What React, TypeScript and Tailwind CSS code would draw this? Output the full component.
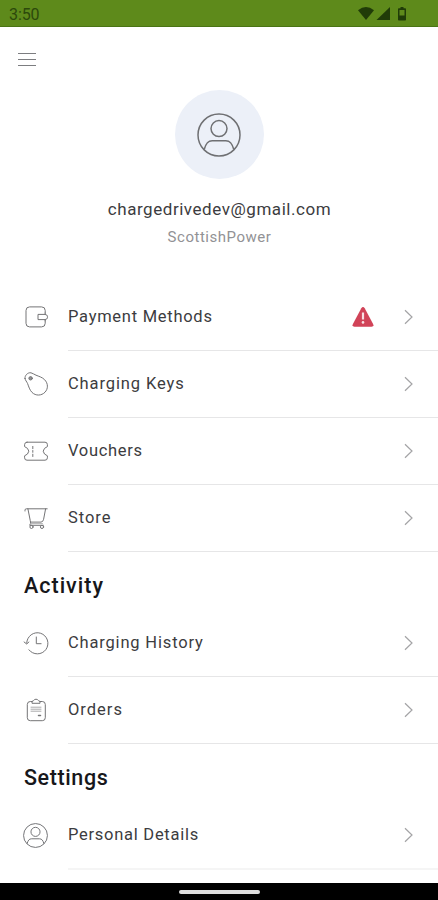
import type { ReactNode } from 'react';

const thin = { fill: 'none', stroke: '#747476', strokeWidth: 1, strokeLinecap: 'round', strokeLinejoin: 'round' } as const;

function WalletIcon() {
  return (
    <svg width="26" height="26" viewBox="0 0 26 26" {...thin}>
      <path d="M22.200 9V6.500a3.600 3.600 0 0 0-3.600-3.600h-12A3.600 3.600 0 0 0 3 6.500v12.800a3.600 3.600 0 0 0 3.600 3.600h12a3.600 3.600 0 0 0 3.600-3.600v-2.600" />
      <path d="M22.200 9v1.400H15v5.200h7.200v1.300M22.200 10.400q2.200.3 2.200 1.800v1.600q0 1.500-2.200 1.800" />
    </svg>
  );
}

function TagIcon() {
  return (
    <svg width="26" height="26" viewBox="0 0 26 26" {...thin}>
      <path d="M2 7.500C1.500 4.500 4.800 1.200 8 1.800c1.800.4 3 1.600 5 2.400 2.900 1.200 6.100 2 8.500 4.400 3.900 3.900 3.700 9.300.5 12.600-3.400 3.600-9.300 3.900-13 .2C6.500 18.800 5.800 15.600 4.600 12.600 3.800 10.600 2.300 9.500 2 7.500Z" />
      <circle cx="7.600" cy="7.300" r="1.700" fill="#909092" />
    </svg>
  );
}

function VoucherIcon() {
  return (
    <svg width="26" height="26" viewBox="0 0 26 26" {...thin}>
      <path d="M4 4.200h18a2.400 2.400 0 0 1 2.400 2.400v2l-2.900 1.800q-2.600 2.800 0 5.600l2.900 1.800v2a2.400 2.400 0 0 1-2.400 2.400H4a2.400 2.400 0 0 1-2.400-2.400v-2L4.500 16q2.600-2.800 0-5.600L1.600 8.600v-2A2.400 2.400 0 0 1 4 4.200Z" />
      <path d="M9.800 8.400v2.300M9.800 12.500v1.800M9.800 16.200v2.300" />
    </svg>
  );
}

function CartIcon() {
  return (
    <svg width="26" height="26" viewBox="0 0 26 26" {...thin}>
      <path d="M2 6V5.200q0-1.400 1.300-1.400h20.900M4.900 3.800l2.300 11.500q.5 2 .3 3L6.700 20.300h13.600M22.600 3.800l-2 10.500q-.6 2.800-2.600 2.800H7.600" />
      <path d="M8 18.600h11.500" stroke="#b5b5b7" />
      <circle cx="8.500" cy="21.900" r="1.600" />
      <circle cx="19" cy="21.900" r="1.600" />
    </svg>
  );
}

function HistoryIcon() {
  return (
    <svg width="26" height="26" viewBox="0 0 26 26" {...thin}>
      <path d="M3.700 13.100A10.600 10.600 0 1 1 5.900 19.800" />
      <path d="m1.100 12 2.600 2 2.200-2M13.300 7v6.700h4.800" />
    </svg>
  );
}

function ClipboardIcon() {
  return (
    <svg width="26" height="26" viewBox="0 0 26 26" {...thin}>
      <path d="M9 4.500H7.300a3 3 0 0 0-3 3v13.200a3 3 0 0 0 3 3h12a3 3 0 0 0 3-3V7.500a3 3 0 0 0-3-3H17" />
      <path d="M9 5.900V5q0-1.200 1.500-1.400 1-1.400 2.500-1.400t2.500 1.400Q17 3.800 17 5v.900z" />
      <path d="M8 10.200h10M8 12.200h10M8 14.200h10" stroke="#aaaaac" />
      <path d="M15.500 18.600h2" strokeWidth="1.500" />
    </svg>
  );
}

function PersonIcon({ size, width }: { size: number; width: number }) {
  return (
    <svg width={size} height={size} viewBox="0 0 44 44" fill="none" stroke="#6f7073" strokeWidth={width}>
      <circle cx="22" cy="22" r="21" />
      <circle cx="22" cy="15.600" r="8" />
      <path d="M7.200 36.500c1.600-5.800 3.400-8.700 8-8.700h13.600c4.600 0 6.400 2.900 8 8.700" />
    </svg>
  );
}

function WarningIcon() {
  return (
    <svg width="22" height="22" viewBox="0 0 22 22">
      <path d="M9.300 2.200q1.700-2.600 3.400 0l8.500 16q1 2.500-1.700 2.500H2.500Q-.2 20.700.8 18.200Z" fill="#d14358" />
      <path d="M11 6.500v7" stroke="#f7dfe3" strokeWidth="2.200" />
      <circle cx="11" cy="16.400" r="1.300" fill="#f7dfe3" />
    </svg>
  );
}

type RowProps = { icon: ReactNode; label: string; tracking: string; warning?: boolean; last?: boolean };

function Row({ icon, label, tracking, warning, last }: RowProps) {
  return (
    <div className={`flex shrink-0 pl-[23px] ${last ? 'h-[68px]' : 'h-[67px]'}`}>
      <div className="flex w-[45px] items-center pb-px">{icon}</div>
      <div className={`flex flex-1 items-center pr-[25px] ${last ? 'border-b-2 border-[#f5f5f5]' : 'border-b border-[#e6e6e7]'}`}>
        <span className={`flex-1 whitespace-nowrap pt-px text-[16.5px] text-[#3c3c40] ${tracking}`}>{label}</span>
        {warning && <span className="mr-[30px]"><WarningIcon /></span>}
        <svg width="9" height="16" viewBox="0 0 9 16" fill="none" stroke="#a4a4a6" strokeWidth="1.200">
          <path d="m1 1.200 7 6.800-7 6.800" />
        </svg>
      </div>
    </div>
  );
}

function Heading({ children, tracking }: { children: string; tracking: string }) {
  return (
    <h2 className={`flex h-[58px] shrink-0 items-center pt-[10px] pl-6 text-[21.5px] font-medium text-[#17171b] ${tracking}`}>
      {children}
    </h2>
  );
}

export default function App() {
  return (
    <div className="flex h-[900px] w-[438px] flex-col overflow-hidden bg-white font-['Roboto',sans-serif]">
      <header className="flex h-[27px] shrink-0 items-center justify-between border-b border-[#4a7415] bg-[#5e8a1b] pr-[29px] pl-[9px]">
        <span className="pt-[3px] text-[16px] tracking-[-0.1px] text-[#2c480b]">3:50</span>
        <svg className="mt-[2px]" width="52" height="16" viewBox="0 0 52 16" fill="#203c08">
          <path d="M1 4.200Q9 -2 17 4.200L9 14Z" />
          <path d="M33 1v13H19.500Z" />
          <path d="M41.800 2.200H43.500V1h3v1.200h1.700q.8 0 .8.800v10.800q0 .8-.8.800h-6.400q-.8 0-.8-.8V3q0-.8.800-.8Zm.7 1.800v5.600h5V4Z" />
        </svg>
      </header>
      <main className="flex min-h-0 flex-1 flex-col overflow-hidden">
        <button className="mt-[26px] ml-[18px] flex h-[13px] w-[18px] shrink-0 flex-col justify-between" aria-label="Menu">
          <span className="h-px w-full bg-[#7c7d80]" />
          <span className="h-px w-full bg-[#7c7d80]" />
          <span className="h-px w-full bg-[#7c7d80]" />
        </button>
        <section className="flex h-[218px] shrink-0 flex-col items-center pt-[24px]">
          <div className="flex size-[89px] shrink-0 items-center justify-center rounded-full bg-[#ecf0f8]">
            <PersonIcon size={44} width={1.5} />
          </div>
          <p className="mt-[18px] ml-px text-[17px] leading-6 tracking-[0.550px] text-[#3c3c40]">chargedrivedev@gmail.com</p>
          <p className="mt-[4px] ml-px text-[15px] leading-6 tracking-[0.520px] text-[#929295]">ScottishPower</p>
        </section>
        <Row icon={<WalletIcon />} label="Payment Methods" tracking="tracking-[0.730px]" warning />
        <Row icon={<TagIcon />} label="Charging Keys" tracking="tracking-[0.880px]" />
        <Row icon={<VoucherIcon />} label="Vouchers" tracking="tracking-[0.700px]" />
        <Row icon={<CartIcon />} label="Store" tracking="tracking-[0.950px]" />
        <Heading tracking="tracking-[1px]">Activity</Heading>
        <Row icon={<HistoryIcon />} label="Charging History" tracking="tracking-[0.820px]" />
        <Row icon={<ClipboardIcon />} label="Orders" tracking="tracking-[1px]" />
        <Heading tracking="tracking-[0.600px]">Settings</Heading>
        <Row icon={<PersonIcon size={25} width={1.7} />} label="Personal Details" tracking="tracking-[0.730px]" last />
      </main>
      <nav className="flex h-[17px] shrink-0 justify-center bg-black pt-[7px]">
        <div className="h-[4px] w-[81px] rounded-full bg-[#dedede]" />
      </nav>
    </div>
  );
}
